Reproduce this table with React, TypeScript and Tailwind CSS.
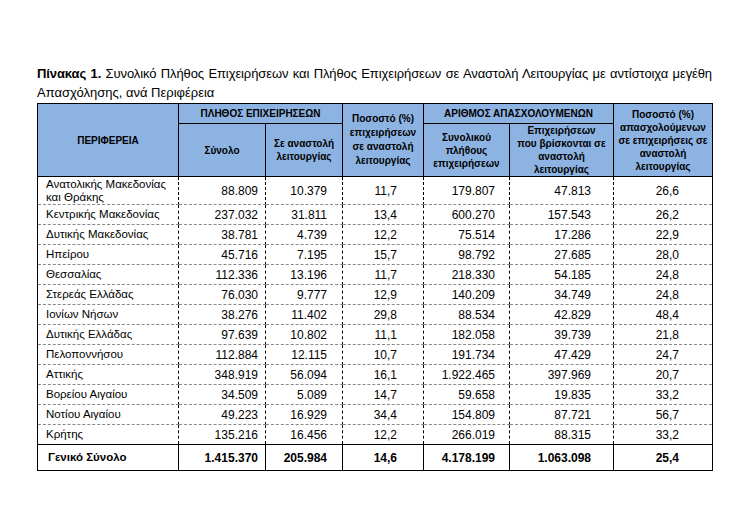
import React from 'react';

type Row = {
  name: React.ReactNode;
  total: string;
  suspended: string;
  pct: string;
  emp: string;
  empSuspended: string;
  empPct: string;
  tall?: boolean;
};

const rows: Row[] = [
  { name: <>Ανατολικής Μακεδονίας<br />και Θράκης</>, total: '88.809', suspended: '10.379', pct: '11,7', emp: '179.807', empSuspended: '47.813', empPct: '26,6', tall: true },
  { name: 'Κεντρικής Μακεδονίας', total: '237.032', suspended: '31.811', pct: '13,4', emp: '600.270', empSuspended: '157.543', empPct: '26,2' },
  { name: 'Δυτικής Μακεδονίας', total: '38.781', suspended: '4.739', pct: '12,2', emp: '75.514', empSuspended: '17.286', empPct: '22,9' },
  { name: 'Ηπείρου', total: '45.716', suspended: '7.195', pct: '15,7', emp: '98.792', empSuspended: '27.685', empPct: '28,0' },
  { name: 'Θεσσαλίας', total: '112.336', suspended: '13.196', pct: '11,7', emp: '218.330', empSuspended: '54.185', empPct: '24,8' },
  { name: 'Στερεάς Ελλάδας', total: '76.030', suspended: '9.777', pct: '12,9', emp: '140.209', empSuspended: '34.749', empPct: '24,8' },
  { name: 'Ιονίων Νήσων', total: '38.276', suspended: '11.402', pct: '29,8', emp: '88.534', empSuspended: '42.829', empPct: '48,4' },
  { name: 'Δυτικής Ελλάδας', total: '97.639', suspended: '10.802', pct: '11,1', emp: '182.058', empSuspended: '39.739', empPct: '21,8' },
  { name: 'Πελοποννήσου', total: '112.884', suspended: '12.115', pct: '10,7', emp: '191.734', empSuspended: '47.429', empPct: '24,7' },
  { name: 'Αττικής', total: '348.919', suspended: '56.094', pct: '16,1', emp: '1.922.465', empSuspended: '397.969', empPct: '20,7' },
  { name: 'Βορείου Αιγαίου', total: '34.509', suspended: '5.089', pct: '14,7', emp: '59.658', empSuspended: '19.835', empPct: '33,2' },
  { name: 'Νοτίου Αιγαίου', total: '49.223', suspended: '16.929', pct: '34,4', emp: '154.809', empSuspended: '87.721', empPct: '56,7' },
  { name: 'Κρήτης', total: '135.216', suspended: '16.456', pct: '12,2', emp: '266.019', empSuspended: '88.315', empPct: '33,2' },
];

const th = 'border border-black bg-[#8db3e2] font-bold text-center align-middle leading-[13px] px-1';
const td = 'border-x border-black border-b border-b-[#8a8a8a] border-dashed text-[12px]';

export default function App() {
  return (
    <div className="min-h-screen w-[756px] h-[511px] bg-white text-black font-['Liberation_Sans',Arial,sans-serif] pt-[64px] pl-[37px]">
      <div className="w-[675px] text-[13px] leading-[19px]">
        <div className="text-justify [text-align-last:justify] tracking-[-0.1px]">
          <span className="font-bold">Πίνακας 1.</span> Συνολικό Πλήθος Επιχειρήσεων και Πλήθος Επιχειρήσεων σε Αναστολή Λειτουργίας με αντίστοιχα μεγέθη
        </div>
        <div>Απασχόλησης, ανά Περιφέρεια</div>
      </div>

      <table className="mt-[1px] w-[675px] table-fixed border-collapse border border-black text-[11px]">
        <colgroup>
          <col className="w-[141px]" />
          <col className="w-[87px]" />
          <col className="w-[77px]" />
          <col className="w-[81px]" />
          <col className="w-[86px]" />
          <col className="w-[104px]" />
          <col className="w-[99px]" />
        </colgroup>
        <thead className="text-[10px]">
          <tr className="h-[20px]">
            <th rowSpan={2} className={th}>ΠΕΡΙΦΕΡΕΙΑ</th>
            <th colSpan={2} className={th}>ΠΛΗΘΟΣ ΕΠΙΧΕΙΡΗΣΕΩΝ</th>
            <th rowSpan={2} className={`${th} leading-[14px]`}>
              Ποσοστό (%)<br />επιχειρήσεων<br />σε αναστολή<br />λειτουργίας
            </th>
            <th colSpan={2} className={th}>ΑΡΙΘΜΟΣ ΑΠΑΣΧΟΛΟΥΜΕΝΩΝ</th>
            <th rowSpan={2} className={th}>
              Ποσοστό (%)<br />απασχολούμενων<br />σε επιχειρήσεις σε<br />αναστολή<br />λειτουργίας
            </th>
          </tr>
          <tr className="h-[53px]">
            <th className={th}>Σύνολο</th>
            <th className={th}>Σε αναστολή<br />λειτουργίας</th>
            <th className={th}>Συνολικού<br />πλήθους<br />επιχειρήσεων</th>
            <th className={th}>Επιχειρήσεων<br />που βρίσκονται σε<br />αναστολή<br />λειτουργίας</th>
          </tr>
        </thead>
        <tbody>
          {rows.map((r, i) => (
            <tr key={i} className={r.tall ? 'h-[28px]' : 'h-[20px]'}>
              <td className={`${td} pl-[8px] leading-[13px] whitespace-nowrap !text-[11.5px]`}>{r.name}</td>
              <td className={`${td} text-right pr-[7px]`}>{r.total}</td>
              <td className={`${td} text-right pr-[15px]`}>{r.suspended}</td>
              <td className={`${td} text-right pr-[26px]`}>{r.pct}</td>
              <td className={`${td} text-right pr-[14px]`}>{r.emp}</td>
              <td className={`${td} text-right pr-[22px]`}>{r.empSuspended}</td>
              <td className={`${td} text-right pr-[33px]`}>{r.empPct}</td>
            </tr>
          ))}
          <tr className="h-[26px] font-bold text-[12px]">
            <td className="border border-black pl-[10px] text-[11.5px]">Γενικό Σύνολο</td>
            <td className="border border-black text-right pr-[7px]">1.415.370</td>
            <td className="border border-black text-right pr-[15px]">205.984</td>
            <td className="border border-black text-right pr-[26px]">14,6</td>
            <td className="border border-black text-right pr-[14px]">4.178.199</td>
            <td className="border border-black text-right pr-[22px]">1.063.098</td>
            <td className="border border-black text-right pr-[33px]">25,4</td>
          </tr>
        </tbody>
      </table>
    </div>
  );
}
